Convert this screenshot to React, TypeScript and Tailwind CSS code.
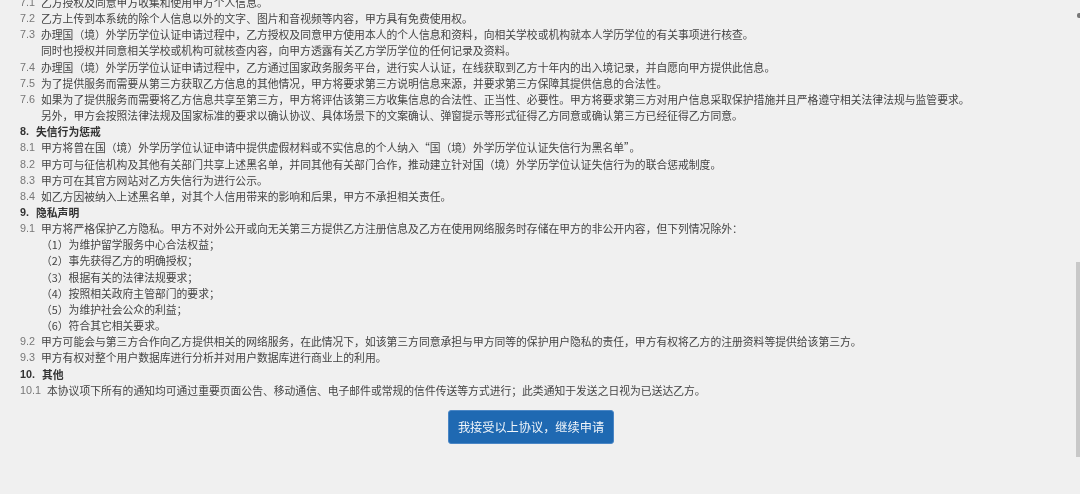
const font = { fontFamily: '"Noto Sans CJK SC", "Liberation Sans", sans-serif' };

type Line = { n?: string; t: string; h?: boolean; sub?: boolean };

const lines: Line[] = [
  { n: '7.1', t: '乙方授权及同意甲方收集和使用甲方个人信息。' },
  { n: '7.2', t: '乙方上传到本系统的除个人信息以外的文字、图片和音视频等内容，甲方具有免费使用权。' },
  { n: '7.3', t: '办理国（境）外学历学位认证申请过程中，乙方授权及同意甲方使用本人的个人信息和资料，向相关学校或机构就本人学历学位的有关事项进行核查。' },
  { t: '同时也授权并同意相关学校或机构可就核查内容，向甲方透露有关乙方学历学位的任何记录及资料。', sub: true },
  { n: '7.4', t: '办理国（境）外学历学位认证申请过程中，乙方通过国家政务服务平台，进行实人认证，在线获取到乙方十年内的出入境记录，并自愿向甲方提供此信息。' },
  { n: '7.5', t: '为了提供服务而需要从第三方获取乙方信息的其他情况，甲方将要求第三方说明信息来源，并要求第三方保障其提供信息的合法性。' },
  { n: '7.6', t: '如果为了提供服务而需要将乙方信息共享至第三方，甲方将评估该第三方收集信息的合法性、正当性、必要性。甲方将要求第三方对用户信息采取保护措施并且严格遵守相关法律法规与监管要求。' },
  { t: '另外，甲方会按照法律法规及国家标准的要求以确认协议、具体场景下的文案确认、弹窗提示等形式征得乙方同意或确认第三方已经征得乙方同意。', sub: true },
  { n: '8.', t: '失信行为惩戒', h: true },
  { n: '8.1', t: '甲方将曾在国（境）外学历学位认证申请中提供虚假材料或不实信息的个人纳入“国（境）外学历学位认证失信行为黑名单”。' },
  { n: '8.2', t: '甲方可与征信机构及其他有关部门共享上述黑名单，并同其他有关部门合作，推动建立针对国（境）外学历学位认证失信行为的联合惩戒制度。' },
  { n: '8.3', t: '甲方可在其官方网站对乙方失信行为进行公示。' },
  { n: '8.4', t: '如乙方因被纳入上述黑名单，对其个人信用带来的影响和后果，甲方不承担相关责任。' },
  { n: '9.', t: '隐私声明', h: true },
  { n: '9.1', t: '甲方将严格保护乙方隐私。甲方不对外公开或向无关第三方提供乙方注册信息及乙方在使用网络服务时存储在甲方的非公开内容，但下列情况除外：' },
];

const items = [
  '（1）为维护留学服务中心合法权益；',
  '（2）事先获得乙方的明确授权；',
  '（3）根据有关的法律法规要求；',
  '（4）按照相关政府主管部门的要求；',
  '（5）为维护社会公众的利益；',
  '（6）符合其它相关要求。',
];

const tail: Line[] = [
  { n: '9.2', t: '甲方可能会与第三方合作向乙方提供相关的网络服务，在此情况下，如该第三方同意承担与甲方同等的保护用户隐私的责任，甲方有权将乙方的注册资料等提供给该第三方。' },
  { n: '9.3', t: '甲方有权对整个用户数据库进行分析并对用户数据库进行商业上的利用。' },
  { n: '10.', t: '其他', h: true },
  { n: '10.1', t: '本协议项下所有的通知均可通过重要页面公告、移动通信、电子邮件或常规的信件传送等方式进行；此类通知于发送之日视为已送达乙方。' },
];

function Row({ line }: { line: Line }) {
  if (line.h) {
    return (
      <div className="flex h-[16.17px] items-center font-bold text-[#333]">
        <span className="mr-[7px] font-['Liberation_Sans']">{line.n}</span>
        <span>{line.t}</span>
      </div>
    );
  }
  if (line.sub) {
    return <div className="flex h-[16.17px] items-center pl-[21px] text-[#444]">{line.t}</div>;
  }
  return (
    <div className="flex h-[16.17px] items-center text-[#444]">
      <span className="mr-[6px] font-['Liberation_Sans'] text-[#777]">{line.n}</span>
      <span>{line.t}</span>
    </div>
  );
}

export default function App() {
  return (
    <div className="relative h-[494px] w-[1080px] overflow-hidden bg-[#f0f0f0] text-[10.8px] whitespace-nowrap" style={font}>
      <div className="-mt-[6px] pl-[20px] blur-[0.3px]">
        {lines.map((l, i) => (
          <Row key={i} line={l} />
        ))}
        {items.map((t) => (
          <div key={t} className="flex h-[16.17px] items-center pl-[21px] text-[#444]">
            {t}
          </div>
        ))}
        {tail.map((l, i) => (
          <Row key={i} line={l} />
        ))}
        <div className="mt-[12px] flex pl-[428px]">
          <button className="h-[34px] w-[166px] rounded-[3px] border border-[#4a86c5] bg-[#1f69b2] text-[12.2px] text-[#f0f5fa]">
            我接受以上协议，继续申请
          </button>
        </div>
      </div>
      <div className="absolute right-0 top-[13px] h-[5px] w-[3px] rounded-l-[2px] bg-[#777]" />
      <div className="absolute right-0 top-[262px] h-[195px] w-[4px] bg-[#c8c8c8]" />
    </div>
  );
}
